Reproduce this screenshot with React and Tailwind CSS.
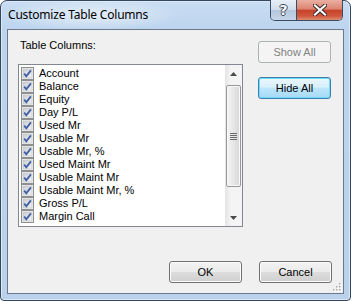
import React from "react";

const items = [
  "Account",
  "Balance",
  "Equity",
  "Day P/L",
  "Used Mr",
  "Usable Mr",
  "Usable Mr, %",
  "Used Maint Mr",
  "Usable Maint Mr",
  "Usable Maint Mr, %",
  "Gross P/L",
  "Margin Call",
];

function Check() {
  return (
    <svg width="13" height="13" viewBox="0 0 13 13" className="shrink-0">
      <defs>
        <linearGradient id="cbg" x1="0" y1="0" x2="1" y2="1">
          <stop offset="0" stopColor="#c9ccd0" />
          <stop offset="1" stopColor="#f4f4f4" />
        </linearGradient>
      </defs>
      <rect x="0.5" y="0.5" width="12" height="12" fill="#f4f4f4" stroke="#8f8f8f" />
      <rect x="2" y="2" width="9" height="9" fill="url(#cbg)" stroke="#b9bcc0" strokeWidth="0.6" />
      <path d="M3.2 6.6 L5.3 9.2 L9.9 3.4" fill="none" stroke="#3f5fa8" strokeWidth="1.8" strokeLinejoin="miter" />
    </svg>
  );
}

function Btn({ children, kind }) {
  const base =
    "w-[73px] h-[22px] rounded-[3px] border flex items-center justify-center leading-none text-[11px]";
  if (kind === "disabled")
    return (
      <div className={`${base} border-[#adb2b5] bg-[#f4f4f4] text-[#838383]`}>{children}</div>
    );
  if (kind === "default")
    return (
      <div
        className={`${base} border-[#3c7fb1] text-black bg-[linear-gradient(to_bottom,#eaf6fd_0%,#d9f0fc_45%,#bee6fd_50%,#a7d9f5_100%)] shadow-[inset_0_0_0_1px_#6fdcf6]`}
      >
        {children}
      </div>
    );
  return (
    <div
      className={`${base} border-[#707070] text-black bg-[linear-gradient(to_bottom,#f2f2f2_0%,#ebebeb_50%,#dddddd_50%,#cfcfcf_100%)] shadow-[inset_0_0_0_1px_#fcfcfc]`}
    >
      {children}
    </div>
  );
}

function Arrow({ up }) {
  return (
    <svg width="7" height="4" viewBox="0 0 7 4">
      {up ? (
        <path d="M3.5 0 L7 4 L0 4 Z" fill="#4a4a4a" />
      ) : (
        <path d="M0 0 L7 0 L3.5 4 Z" fill="#4a4a4a" />
      )}
    </svg>
  );
}

export default function App() {
  return (
    <div className="w-[351px] h-[301px] font-['Liberation_Sans',Arial,sans-serif] text-[11px] text-black">
      <div className="relative w-full h-full rounded-t-[7px] rounded-b-[4px] border border-[#34475d] bg-[linear-gradient(to_bottom,#c9ddf3_0px,#bcd4ee_30px,#b9d1ea_100%)] flex flex-col shadow-[inset_0_0_0_1px_#dbe8f6]">
        {/* title bar */}
        <div className="h-[28px] flex items-start justify-between shrink-0 bg-[radial-gradient(ellipse_90px_16px_at_90px_14px,rgba(255,255,255,0.55),rgba(255,255,255,0))]">
          <div className="pl-[7px] pt-[6px] leading-[16px] text-[12px] font-['Noto_Sans',sans-serif] text-black tracking-[-0.2px]">
            Customize Table Columns
          </div>
          <div className="mt-[-1px] mr-[7px] h-[21px] flex border-l border-r border-b border-[#3a4d63] rounded-b-[5px] overflow-hidden">
            <div className="w-[26px] border-r border-[#3a4d63] flex items-center justify-center bg-[linear-gradient(to_bottom,#e6eef7_0%,#d2deec_48%,#b5c7dc_52%,#c6d6e8_100%)]">
              <span className="text-white font-bold text-[14px] leading-none font-['DejaVu_Sans',sans-serif] [text-shadow:1px_0_0_#3a4655,-1px_0_0_#3a4655,0_1px_0_#3a4655,0_-1px_0_#3a4655]">
                ?
              </span>
            </div>
            <div className="w-[45px] flex items-center justify-center bg-[linear-gradient(to_bottom,#eab0a3_0%,#dc8470_45%,#c7432b_52%,#d0583d_80%,#dd8a70_100%)]">
              <svg width="14" height="12" viewBox="0 0 14 12">
                <path d="M2 1.5 L12 10.5 M12 1.5 L2 10.5" stroke="#3a2a2a" strokeWidth="4.2" strokeLinecap="square" />
                <path d="M2 1.5 L12 10.5 M12 1.5 L2 10.5" stroke="#ffffff" strokeWidth="2.2" strokeLinecap="square" />
              </svg>
            </div>
          </div>
        </div>

        {/* client area */}
        <div className="relative mx-[6px] mb-[6px] flex-1 border border-[#6a7a8c] bg-[#f0f0f0] flex flex-col">
          <div className="flex">
            <div className="ml-[10px] flex flex-col">
              <div className="pl-[2px] mt-[9px] leading-[13px] h-[13px]">Table Columns:</div>
              <div className="mt-[12px] w-[225px] h-[163px] border border-[#828790] bg-white flex">
                <div className="flex-1 pt-[2px] pl-[2px] overflow-hidden">
                  {items.map((t) => (
                    <div key={t} className="h-[13px] flex items-center gap-[5px] whitespace-nowrap leading-[13px]">
                      <Check />
                      <span>{t}</span>
                    </div>
                  ))}
                </div>
                <div className="w-[17px] flex flex-col bg-[linear-gradient(to_right,#e4e4e4,#f4f4f4_35%,#f4f4f4)]">
                  <div className="h-[17px] flex items-center justify-center">
                    <Arrow up />
                  </div>
                  <div className="flex-1 flex flex-col">
                    <div className="mt-[3px] mx-[1px] h-[102px] rounded-[2px] border border-[#979797] bg-[linear-gradient(to_right,#f5f5f5_0%,#e6e6e6_50%,#d6d6d6_100%)] shadow-[inset_0_0_0_1px_#fafafa] flex items-center justify-center">
                      <div className="flex flex-col gap-[1px]">
                        <div className="w-[7px] h-[1px] bg-[#6b6b6b]" />
                        <div className="w-[7px] h-[1px] bg-[#6b6b6b]" />
                        <div className="w-[7px] h-[1px] bg-[#6b6b6b]" />
                        <div className="w-[7px] h-[1px] bg-[#6b6b6b]" />
                      </div>
                    </div>
                  </div>
                  <div className="h-[17px] flex items-center justify-center">
                    <Arrow />
                  </div>
                </div>
              </div>
            </div>
            <div className="ml-[15px] mt-[11px] flex flex-col gap-[14px]">
              <Btn kind="disabled">Show All</Btn>
              <Btn kind="default">Hide All</Btn>
            </div>
          </div>

          <div className="mt-auto flex justify-end gap-[17px] pr-[11px] pb-[10px]">
            <Btn>OK</Btn>
            <Btn>Cancel</Btn>
          </div>

          <svg className="absolute right-[1px] bottom-[1px]" width="10" height="10" viewBox="0 0 10 10">
            {[
              [7, 1],
              [4, 4],
              [7, 4],
              [1, 7],
              [4, 7],
              [7, 7],
            ].map(([x, y]) => (
              <g key={`${x}-${y}`}>
                <rect x={x + 1} y={y + 1} width="1.5" height="1.5" fill="#ffffff" />
                <rect x={x} y={y} width="1.5" height="1.5" fill="#a7a7a7" />
              </g>
            ))}
          </svg>
        </div>
      </div>
    </div>
  );
}
